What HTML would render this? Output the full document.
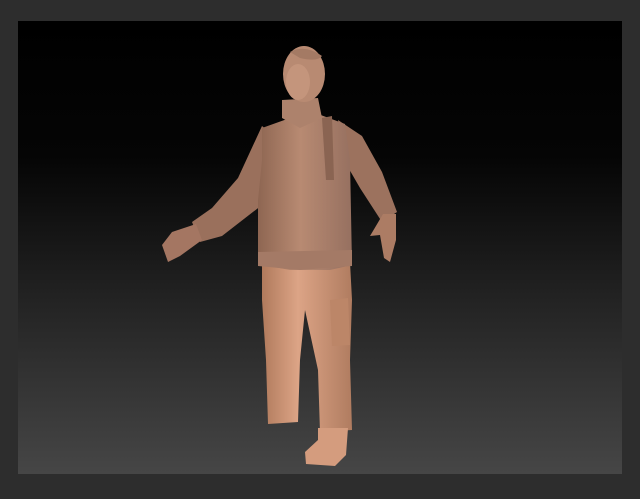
<!DOCTYPE html>
<html><head><style>
html,body{margin:0;padding:0;background:#2d2d2d;width:640px;height:499px;overflow:hidden}
.v{position:absolute;left:18px;top:21px;width:604px;height:453px;background:linear-gradient(#000 0%,#050505 30%,#262626 65%,#464646 100%)}
svg{position:absolute;left:0;top:0}
</style></head><body>
<div class="v"></div>
<svg width="640" height="499" viewBox="0 0 640 499">
<defs>
<linearGradient id="s" x1="0" x2="1" y1="0" y2="0">
<stop offset="0" stop-color="#8e6652"/><stop offset="0.45" stop-color="#b88a72"/><stop offset="1" stop-color="#967060"/>
</linearGradient>
<linearGradient id="p" x1="0" x2="1" y1="0" y2="0">
<stop offset="0" stop-color="#b07a5c"/><stop offset="0.4" stop-color="#dca486"/><stop offset="1" stop-color="#b07c60"/>
</linearGradient>
</defs>
<path d="M262 265 L350 262 L352 300 L350 360 L352 430 L320 432 L318 370 L305 310 L300 360 L298 422 L268 424 L266 360 L262 300 Z" fill="url(#p)"/>
<path d="M318 428 L348 428 L346 455 L335 466 L306 464 L305 452 L318 440 Z" fill="#d49c7e"/>
<path d="M330 300 L348 298 L350 345 L332 346 Z" fill="#bc8668"/>
<path d="M262 126 L282 142 L262 205 L222 236 L200 242 L192 222 L212 208 L238 178 Z" fill="#9a705c"/>
<path d="M196 224 L172 232 L162 245 L168 262 L180 256 L202 240 Z" fill="#a47662"/>
<path d="M338 120 L362 136 L382 172 L397 212 L382 222 L360 188 L345 162 Z" fill="#9c725e"/>
<path d="M383 214 L396 214 L396 240 L390 262 L384 258 L380 235 L370 236 Z" fill="#ac7c64"/>
<path d="M262 128 L290 118 L318 114 L345 124 L350 160 L352 265 L330 270 L290 270 L258 264 L258 200 L262 160 Z" fill="url(#s)"/>
<path d="M258 252 L352 250 L352 266 L300 270 L258 266 Z" fill="#a47a66"/>
<path d="M282 100 L318 98 L322 118 L300 128 L282 118 Z" fill="#ad826c"/>
<path d="M322 118 L332 116 L334 180 L326 180 Z" fill="#8a6452"/>
<ellipse cx="304" cy="74" rx="21" ry="28" fill="#b88a72"/>
<ellipse cx="298" cy="82" rx="12" ry="18" fill="#c4957c"/>
<path d="M290 52 Q305 44 322 56 Q318 62 300 58 Z" fill="#a47a64"/>
</svg>
</body></html>
